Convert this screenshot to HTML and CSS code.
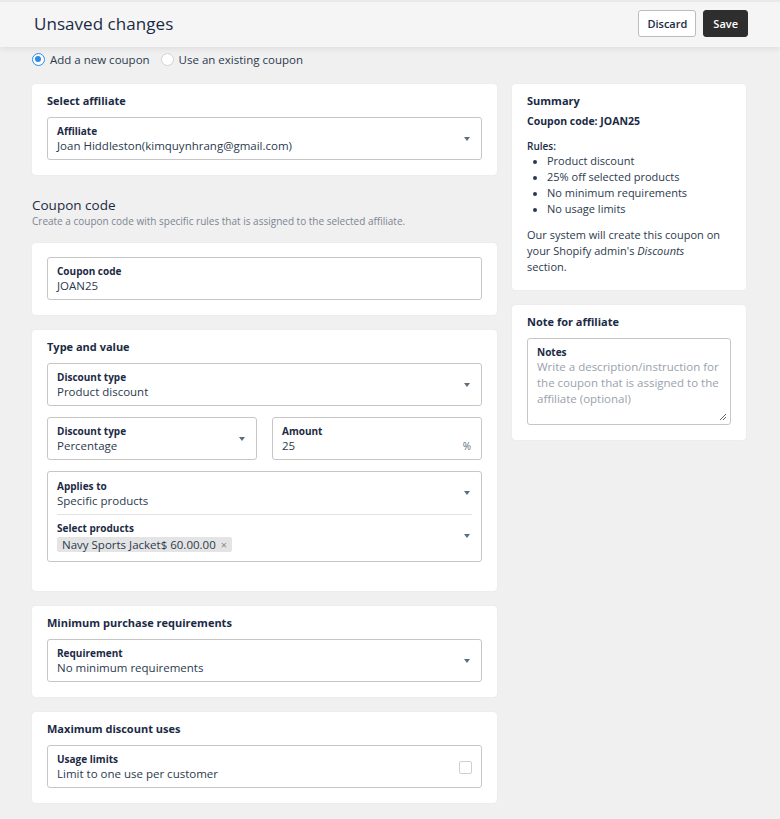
FILE: index.html
```html
<!DOCTYPE html>
<html>
<head>
<meta charset="utf-8">
<link rel="stylesheet" href="styles.css">
</head>
<body>
<header class="topbar">
  <h1 class="topbar-title">Unsaved changes</h1>
  <div class="topbar-actions">
    <button class="btn btn-secondary">Discard</button>
    <button class="btn btn-primary">Save</button>
  </div>
</header>

<div class="radios">
  <label class="radio"><span class="radio-dot checked"></span>Add a new coupon</label>
  <label class="radio"><span class="radio-dot"></span>Use an existing coupon</label>
</div>

<main class="layout">
  <div class="col-main">
    <section class="card">
      <h2 class="card-title">Select affiliate</h2>
      <div class="field">
        <div class="field-body">
          <div class="field-label">Affiliate</div>
          <div class="field-value">Joan Hiddleston(kimquynhrang@gmail.com)</div>
        </div>
        <span class="caret"></span>
      </div>
    </section>

    <div class="section-head">
      <h2 class="section-title">Coupon code</h2>
      <p class="section-sub">Create a coupon code with specific rules that is assigned to the selected affiliate.</p>
    </div>

    <section class="card card-notitle">
      <div class="field">
        <div class="field-body">
          <div class="field-label">Coupon code</div>
          <div class="field-value">JOAN25</div>
        </div>
      </div>
    </section>

    <section class="card card-tall">
      <h2 class="card-title">Type and value</h2>
      <div class="stack">
        <div class="field">
          <div class="field-body">
            <div class="field-label">Discount type</div>
            <div class="field-value">Product discount</div>
          </div>
          <span class="caret"></span>
        </div>
        <div class="row">
          <div class="field">
            <div class="field-body">
              <div class="field-label">Discount type</div>
              <div class="field-value">Percentage</div>
            </div>
            <span class="caret"></span>
          </div>
          <div class="field">
            <div class="field-body">
              <div class="field-label">Amount</div>
              <div class="field-value">25</div>
            </div>
            <span class="suffix">%</span>
          </div>
        </div>
        <div class="field field-group">
          <div class="group-row">
            <div class="field-body">
              <div class="field-label">Applies to</div>
              <div class="field-value">Specific products</div>
            </div>
            <span class="caret"></span>
          </div>
          <div class="group-row group-row-second">
            <div class="field-body">
              <div class="field-label">Select products</div>
              <div class="field-value"><span class="tag">Navy Sports Jacket$ 60.00.00 <span class="tag-x">×</span></span></div>
            </div>
            <span class="caret"></span>
          </div>
        </div>
      </div>
    </section>

    <section class="card">
      <h2 class="card-title">Minimum purchase requirements</h2>
      <div class="field">
        <div class="field-body">
          <div class="field-label">Requirement</div>
          <div class="field-value">No minimum requirements</div>
        </div>
        <span class="caret"></span>
      </div>
    </section>

    <section class="card">
      <h2 class="card-title">Maximum discount uses</h2>
      <div class="field">
        <div class="field-body">
          <div class="field-label">Usage limits</div>
          <div class="field-value">Limit to one use per customer</div>
        </div>
        <span class="checkbox"></span>
      </div>
    </section>
  </div>

  <aside class="col-side">
    <section class="card">
      <h2 class="card-title">Summary</h2>
      <p class="summary-code">Coupon code: JOAN25</p>
      <p class="summary-rules">Rules:</p>
      <ul class="summary-list">
        <li>Product discount</li>
        <li>25% off selected products</li>
        <li>No minimum requirements</li>
        <li>No usage limits</li>
      </ul>
      <p class="summary-text">Our system will create this coupon on your Shopify admin's <em>Discounts</em> section.</p>
    </section>

    <section class="card">
      <h2 class="card-title">Note for affiliate</h2>
      <div class="field textarea">
        <div class="field-body">
          <div class="field-label">Notes</div>
          <div class="field-placeholder">Write a description/instruction for the coupon that is assigned to the affiliate (optional)</div>
        </div>
        <svg class="resize" width="8" height="8" viewBox="0 0 8 8"><path d="M1 7 L7 1 M4 7 L7 4" stroke="#555" stroke-width="0.9" fill="none"/></svg>
      </div>
    </section>
  </aside>
</main>
</body>
</html>
```

FILE: styles.css
```css
* { box-sizing: border-box; }
html, body { margin: 0; padding: 0; }
body {
  background: #f0f0f0;
  font-family: "Open Sans", "Liberation Sans", sans-serif;
  color: #1d2b3e;
  width: 780px;
  height: 819px;
  overflow: hidden;
}
h1, h2, p, ul { margin: 0; }

.topbar {
  height: 47px;
  background: #f5f5f5;
  border-top: 2px solid #e9e9e9;
  box-shadow: 0 2px 6px rgba(0,0,0,0.08);
  display: flex;
  align-items: center;
  justify-content: space-between;
  padding: 0 32px 2px 34px;
}
.topbar-title {
  font-size: 17px;
  font-weight: 500;
  color: #1b2a44;
  letter-spacing: 0.05px;
}
.topbar-actions { display: flex; gap: 7px; }
.btn {
  font-family: inherit;
  font-size: 11px;
  font-weight: 600;
  height: 27px;
  border-radius: 3px;
  padding: 0 8px;
  cursor: pointer;
}
.btn-secondary { background: #fff; border: 1px solid #bcbcbc; color: #1b2a44; }
.btn-primary { background: #2e2e2e; border: 1px solid #2e2e2e; color: #fff; padding: 0 9px; }

.radios {
  display: flex;
  gap: 11px;
  padding: 5px 0 0 32px;
  height: 37px;
}
.radio {
  display: flex;
  align-items: center;
  gap: 5px;
  font-size: 11.5px;
  color: #2b3a4e;
  height: 14px;
}
.radio-dot {
  width: 13px; height: 13px;
  border-radius: 50%;
  border: 1px solid #cfd3d8;
  background: #fff;
  display: inline-block;
  position: relative;
}
.radio-dot.checked { border: 1.5px solid #2e8ae6; }
.radio-dot.checked::after {
  content: "";
  position: absolute;
  left: 2px; top: 2px;
  width: 6px; height: 6px;
  border-radius: 50%;
  background: #2e8ae6;
}

.layout {
  display: flex;
  gap: 15px;
  padding: 0 32px;
  align-items: flex-start;
}
.col-main { width: 465px; display: flex; flex-direction: column; gap: 15px; }
.col-side { width: 234px; display: flex; flex-direction: column; gap: 15px; }

.card {
  background: #fff;
  border-radius: 4px;
  box-shadow: 0 0 2px rgba(0,0,0,0.06);
  padding: 10px 15px 15px;
}
.card-notitle { padding-top: 14px; padding-bottom: 15px; }
.card-tall { padding-bottom: 29px; }
.card-title {
  font-size: 11px;
  font-weight: 700;
  color: #1b2a44;
  line-height: 14px;
  margin-bottom: 9px;
}

.section-head { margin: 7px 0 0; }
.section-title { font-size: 13.5px; font-weight: 500; color: #1b2a44; line-height: 17px; }
.section-sub { font-size: 10px; color: #7c8592; line-height: 14px; }

.field {
  border: 1px solid #c6c6c6;
  border-radius: 3px;
  display: flex;
  align-items: center;
  padding: 7px 10px 5px 9px;
  min-height: 43px;
}
.field-body { flex: 1; min-width: 0; }
.field-label { font-size: 10px; font-weight: 700; color: #1b2a44; line-height: 13px; }
.field-value { font-size: 11.5px; color: #2b3a4e; line-height: 16px; }
.field-placeholder { font-size: 11.5px; color: #9aa2ad; line-height: 16px; }
.caret {
  width: 0; height: 0;
  border-left: 3.5px solid transparent;
  border-right: 3.5px solid transparent;
  border-top: 4px solid #5b6f80;
  margin-right: 1px;
  margin-bottom: 2px;
}
.suffix { font-size: 10px; color: #5b6f80; margin-top: 13px; }

.stack { display: flex; flex-direction: column; gap: 11px; }
.row { display: grid; grid-template-columns: 1fr 1fr; gap: 15px; }

.field-group { flex-direction: column; align-items: stretch; padding: 0 9px; }
.group-row { display: flex; align-items: center; padding: 7px 1px 5px 0; min-height: 42px; }
.group-row-second { border-top: 1px solid #e2e2e2; min-height: 47px; padding-top: 5px; padding-bottom: 7px; }
.tag {
  display: inline-block;
  background: #e4e4e4;
  padding: 0 5px;
  border-radius: 2px;
  margin-top: 2px;
  font-size: 11.5px;
  line-height: 15px;
}
.tag-x { color: #888; font-size: 11px; margin-left: 2px; }
.checkbox {
  width: 13px; height: 13px;
  border: 1px solid #d0d0d0;
  border-radius: 2px;
  background: #fff;
  margin-right: -1px;
}

.summary-code { font-size: 10.5px; font-weight: 700; color: #1b2a44; margin-top: -3px; line-height: 14px; }
.summary-rules { font-size: 10px; font-weight: 600; color: #1b2a44; margin-top: 11px; line-height: 14px; }
.summary-list { padding-left: 20px; font-size: 11px; color: #2b3a4e; line-height: 16px; }
.summary-list li::marker { font-size: 10px; }
.summary-text { font-size: 11px; color: #2b3a4e; line-height: 16px; margin-top: 10px; max-width: 196px; }

.textarea { align-items: flex-start; min-height: 87px; position: relative; padding-top: 7px; }
.resize { position: absolute; right: 3px; bottom: 3px; }
```
